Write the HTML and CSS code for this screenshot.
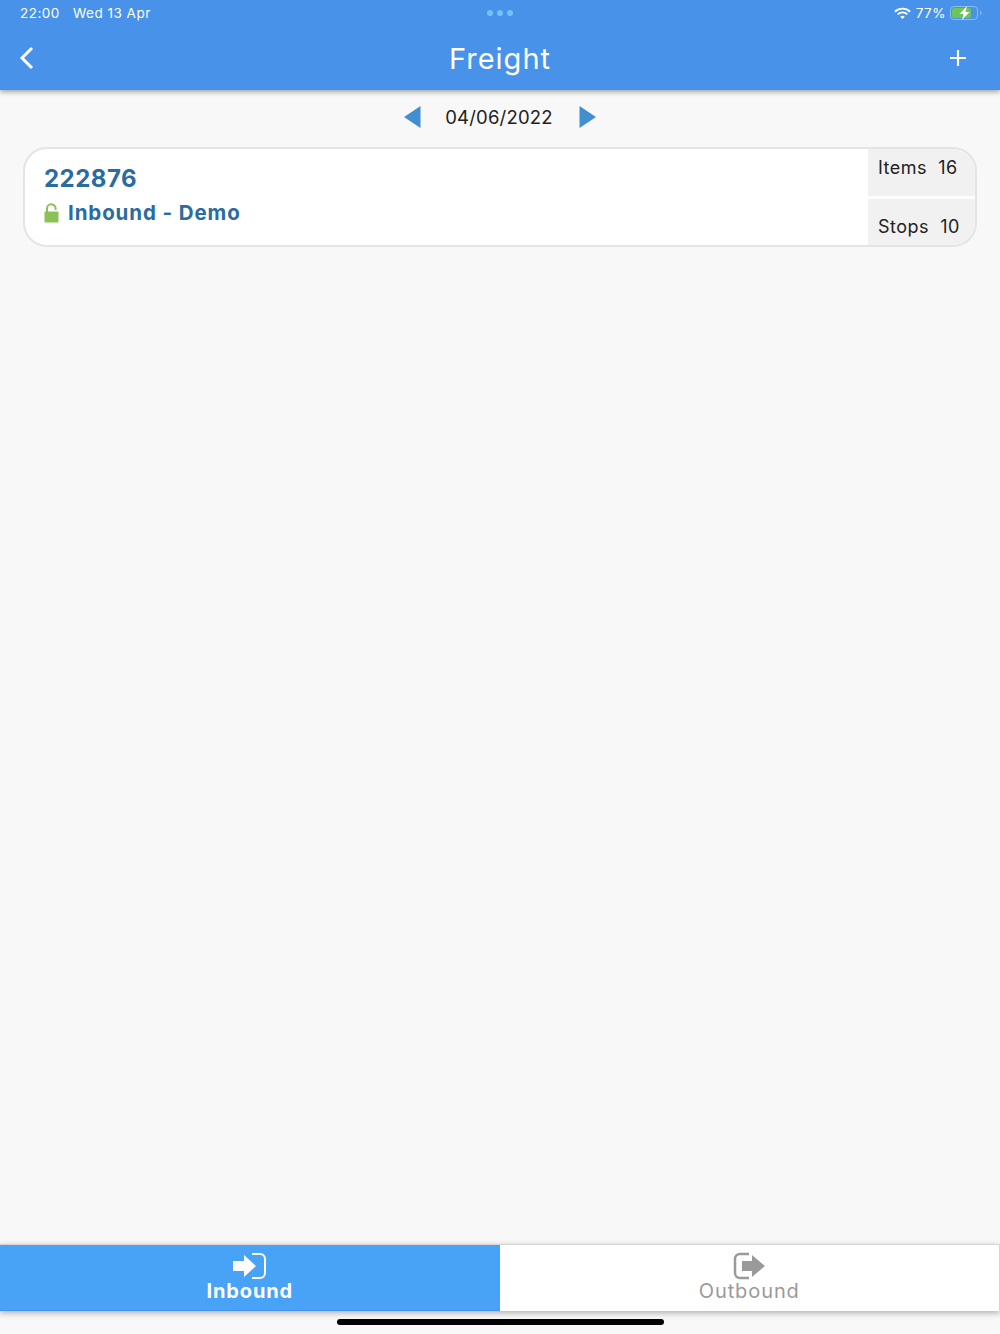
FILE: index.html
```html
<!DOCTYPE html>
<html lang="en">
<head>
  <meta charset="UTF-8">
  <title>Freight</title>
  <link rel="stylesheet" href="styles.css">
</head>
<body>
  <div class="app">
    <div class="top">
      <div class="status">
        <div class="status-left">
          <span>22:00</span>
          <span>Wed 13 Apr</span>
        </div>
        <div class="dots"><i></i><i></i><i></i></div>
        <div class="status-right">
          <svg class="wifi" width="17" height="13" viewBox="0 0 18 13">
            <path d="M1 4.600a11.500 11.500 0 0 1 16 0" fill="none" stroke="#fff" stroke-width="2"/>
            <path d="M3.900 7.400a7.400 7.400 0 0 1 10.200 0" fill="none" stroke="#fff" stroke-width="2"/>
            <path d="M6.600 10a3.400 3.400 0 0 1 4.800 0L9 12.400z" fill="#fff"/>
          </svg>
          <span>77%</span>
          <svg class="battery" width="32" height="14" viewBox="0 0 32 14">
            <rect x="0.500" y="0.500" width="27" height="13" rx="3.500" fill="none" stroke="#8fbcf2"/>
            <rect x="2" y="2" width="19" height="10" rx="2" fill="#6cc558"/>
            <path d="M30 5v4a2 2 0 0 0 1.500-2 2 2 0 0 0-1.500-2z" fill="#8fbcf2"/>
            <path d="M17 0 9.500 8h4l-1.500 6 7.500-8h-4z" fill="#fff"/>
          </svg>
        </div>
      </div>
      <div class="navbar">
        <svg class="back" width="18" height="24" viewBox="0 0 18 24">
          <path d="M14 2 4 12l10 10" fill="none" stroke="#fff" stroke-width="3"/>
        </svg>
        <h1>Freight</h1>
        <svg class="plus" width="18" height="18" viewBox="0 0 18 18">
          <path d="M9 1v16M1 9h16" fill="none" stroke="#fff" stroke-width="2.200"/>
        </svg>
      </div>
    </div>

    <div class="date-row">
      <svg width="18" height="24" viewBox="0 0 18 24"><path d="M17.500 1v22L1 12z" fill="#418fd0"/></svg>
      <span class="date">04/06/2022</span>
      <svg width="18" height="24" viewBox="0 0 18 24"><path d="M.5 1v22L17 12z" fill="#418fd0"/></svg>
    </div>

    <div class="list">
      <div class="card">
        <div class="card-main">
          <div class="card-num">222876</div>
          <div class="card-name">
            <svg width="15" height="20" viewBox="0 0 15 20">
              <path d="M3 9V5.500a4.300 4.300 0 0 1 8.600 0V7" fill="none" stroke="#8bc255" stroke-width="2"/>
              <rect x="0.500" y="8.500" width="14" height="11" rx="1" fill="#8bc255"/>
            </svg>
            <span>Inbound - Demo</span>
          </div>
        </div>
        <div class="card-side">
          <div class="stat stat-top">Items&nbsp; 16</div>
          <div class="stat stat-bottom">Stops&nbsp; 10</div>
        </div>
      </div>
    </div>

    <div class="tabs">
      <div class="tab active">
        <svg width="36" height="28" viewBox="0 0 36 28">
          <path d="M1 9h11V3l12 11-12 11v-6H1z" fill="#fff"/>
          <path d="M20 2h8a5 5 0 0 1 5 5v14a5 5 0 0 1-5 5h-8" fill="none" stroke="#fff" stroke-width="2"/>
        </svg>
        <span>Inbound</span>
      </div>
      <div class="tab">
        <svg width="34" height="28" viewBox="0 0 34 28">
          <path d="M17 2H8a5 5 0 0 0-5 5v14a5 5 0 0 0 5 5h9" fill="none" stroke="#9a9a9a" stroke-width="2.500"/>
          <path d="M10 9h10V3l13 11-13 11v-6H10z" fill="#9a9a9a"/>
        </svg>
        <span>Outbound</span>
      </div>
    </div>

    <div class="home-bar"><div class="home-pill"></div></div>
  </div>
</body>
</html>
```

FILE: styles.css
```css
* {
  box-sizing: border-box;
}

html, body {
  margin: 0;
  padding: 0;
  width: 1000px;
  height: 1334px;
  overflow: hidden;
  background: #f8f8f8;
  font-family: "Inter", "Liberation Sans", sans-serif;
  color: #222;
}

.app {
  display: flex;
  flex-direction: column;
  height: 1334px;
}

.top {
  height: 90px;
  background: #4892ea;
  color: #fff;
  box-shadow: 0 2px 5px rgba(0, 0, 0, 0.35);
  position: relative;
}

.status {
  display: grid;
  grid-template-columns: 1fr auto 1fr;
  align-items: center;
  height: 26px;
  padding: 0 20px;
  font-size: 13.500px;
  letter-spacing: 0.5px;
}

.status-left {
  display: flex;
  gap: 13px;
}

.status-right {
  display: flex;
  justify-content: flex-end;
  align-items: center;
  gap: 4px;
  margin-right: -2px;
}

.wifi {
  margin-right: 1px;
}

.dots {
  display: flex;
  gap: 4px;
}

.dots i {
  width: 6px;
  height: 6px;
  border-radius: 50%;
  background: #74c1fb;
}

.navbar {
  display: grid;
  grid-template-columns: 1fr auto 1fr;
  align-items: center;
  height: 64px;
  padding: 0 33px;
}

.navbar h1 {
  margin: 0;
  font-size: 29px;
  font-weight: 400;
  letter-spacing: 1px;
}

.back {
  margin-left: -15px;
}

.plus {
  justify-self: end;
}

.date-row {
  display: flex;
  justify-content: center;
  align-items: center;
  height: 57px;
  padding-bottom: 3px;
}

.date {
  font-size: 18.500px;
  letter-spacing: 0.2px;
  color: #222;
  margin: 0 26px 0 24px;
}

.list {
  flex: 1;
  padding: 0 23px;
}

.card {
  display: flex;
  height: 100px;
  background: #fff;
  border: 2px solid #e4e4e4;
  border-radius: 24px;
  overflow: hidden;
}

.card-main {
  flex: 1;
  padding: 15px 0 0 19px;
  color: #2a6c9f;
  font-weight: 700;
}

.card-num {
  font-size: 24px;
  letter-spacing: 0.5px;
  line-height: 30px;
}

.card-name {
  display: flex;
  align-items: center;
  gap: 9px;
  margin-top: 6px;
  font-size: 20.500px;
  letter-spacing: 0.9px;
}

.card-side {
  width: 107px;
  display: flex;
  flex-direction: column;
  gap: 3px;
}

.stat {
  height: 46.500px;
  background: #f1f1f1;
  font-size: 18px;
  letter-spacing: 0.5px;
  padding-left: 10px;
  color: #222;
}

.stat-top {
  padding-top: 8px;
}

.stat-bottom {
  padding-top: 17px;
}

.tabs {
  display: flex;
  height: 67px;
  background: #fff;
  border-top: 1px solid #d5d5d5;
  border-right: 1px solid #d5d5d5;
  box-shadow: 0 2px 6px rgba(0, 0, 0, 0.3);
}

.tab {
  flex: 1;
  display: flex;
  flex-direction: column;
  align-items: center;
  padding-top: 7px;
  font-size: 20px;
  letter-spacing: 0.9px;
  color: #9a9a9a;
}

.tab svg {
  display: block;
}

.tab span {
  margin-top: -1px;
  line-height: 24px;
}

.tab.active {
  background: #48a2f6;
  color: #fff;
  font-weight: 700;
  border-bottom: 1px solid #4892ea;
}

.home-bar {
  height: 23px;
  display: flex;
  justify-content: center;
  padding-top: 8px;
}

.home-pill {
  width: 327px;
  height: 6px;
  border-radius: 3px;
  background: #000;
}
```
